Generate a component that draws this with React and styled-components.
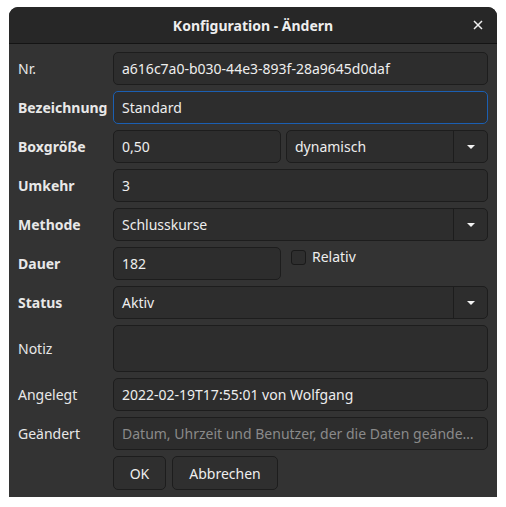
import React from 'react';
import styled, { createGlobalStyle } from 'styled-components';

const GlobalStyle = createGlobalStyle`
  html, body {
    margin: 0;
    padding: 0;
    background: #ffffff;
  }
  body {
    font-family: 'Noto Sans', 'DejaVu Sans', sans-serif;
    font-size: 14px;
  }
`;

const Page = styled.div`
  width: 506px;
  height: 507px;
  padding: 7px 9px 10px 9px;
  box-sizing: border-box;
`;

const Window = styled.div`
  width: 488px;
  height: 490px;
  background: #333333;
  border-radius: 9px 9px 0 0;
  overflow: hidden;
  display: flex;
  flex-direction: column;
`;

const TitleBar = styled.div`
  height: 36px;
  background: #272727;
  border-bottom: 1px solid #141414;
  display: flex;
  align-items: center;
  justify-content: center;
  position: relative;
  color: #eeeeee;
  font-weight: 700;
  font-size: 14px;
`;

const CloseButton = styled.span`
  position: absolute;
  right: 12px;
  top: 11px;
  width: 14px;
  height: 14px;
  display: flex;
  align-items: center;
  justify-content: center;
`;

const Form = styled.div`
  display: flex;
  flex-direction: column;
  gap: 6px;
  padding: 8px 9px 0 9px;
`;

const Row = styled.div`
  display: grid;
  grid-template-columns: 95px 1fr;
  align-items: center;
  min-height: ${(p) => p.$h || 33}px;
`;

const Label = styled.div`
  color: #e8e8e8;
  font-weight: ${(p) => (p.$bold ? 700 : 400)};
  font-size: 14px;
  white-space: nowrap;
`;

const Field = styled.div`
  height: ${(p) => p.$h || 33}px;
  box-sizing: border-box;
  background: #2d2d2d;
  border: 1px solid ${(p) => (p.$focus ? '#1b5fb2' : '#1d1d1d')};
  border-radius: 5px;
  display: flex;
  align-items: center;
  padding: 0 8px;
  color: ${(p) => (p.$placeholder ? '#8a8a8a' : '#eeeeee')};
  font-size: 14px;
  white-space: nowrap;
  overflow: hidden;
  min-width: 0;
`;

const Split = styled.div`
  display: grid;
  grid-template-columns: 168px 1fr;
  gap: 5px;
  align-items: ${(p) => (p.$top ? 'start' : 'center')};
`;

const Combo = styled.div`
  height: 33px;
  box-sizing: border-box;
  background: #2d2d2d;
  border: 1px solid #1d1d1d;
  border-radius: 5px;
  display: grid;
  grid-template-columns: 1fr 34px;
  color: #eeeeee;
  font-size: 14px;
  min-width: 0;
`;

const ComboText = styled.div`
  display: flex;
  align-items: center;
  padding: 0 8px;
  white-space: nowrap;
`;

const ComboArrow = styled.div`
  border-left: 1px solid #1d1d1d;
  display: flex;
  align-items: center;
  justify-content: center;
`;

const Check = styled.label`
  display: flex;
  align-items: center;
  gap: 6px;
  padding: 2px 0 0 5px;
  line-height: 16px;
  color: #eeeeee;
  font-size: 14px;
`;

const Box = styled.span`
  width: 13px;
  height: 13px;
  margin-top: 1px;
  border: 1px solid #1a1a1a;
  background: #2e2e2e;
  border-radius: 3px;
`;

const Buttons = styled.div`
  display: flex;
  gap: 6px;
  margin-left: 95px;
`;

const Button = styled.button`
  height: 34px;
  box-sizing: border-box;
  width: ${(p) => p.$w}px;
  padding: 0;
  background: #2f2f2f;
  border: 1px solid #1d1d1d;
  border-radius: 5px;
  color: #eeeeee;
  font-family: inherit;
  font-size: 14px;
`;

const Arrow = () => (
  <svg width="10" height="6" viewBox="0 0 10 6">
    <path d="M1 1h8L5 5z" fill="#f2f2f2" />
  </svg>
);

const ComboBox = ({ value }) => (
  <Combo>
    <ComboText>{value}</ComboText>
    <ComboArrow>
      <Arrow />
    </ComboArrow>
  </Combo>
);

export default function App() {
  return (
    <Page>
      <GlobalStyle />
      <Window>
        <TitleBar>
          Konfiguration - Ändern
          <CloseButton>
            <svg width="10" height="10" viewBox="0 0 10 10">
              <path d="M1 1l8 8M9 1l-8 8" stroke="#f0f0f0" strokeWidth="1.5" />
            </svg>
          </CloseButton>
        </TitleBar>
        <Form>
          <Row>
            <Label>Nr.</Label>
            <Field>a616c7a0-b030-44e3-893f-28a9645d0daf</Field>
          </Row>
          <Row>
            <Label $bold>Bezeichnung</Label>
            <Field $focus>Standard</Field>
          </Row>
          <Row>
            <Label $bold>Boxgröße</Label>
            <Split>
              <Field>0,50</Field>
              <ComboBox value="dynamisch" />
            </Split>
          </Row>
          <Row>
            <Label $bold>Umkehr</Label>
            <Field>3</Field>
          </Row>
          <Row>
            <Label $bold>Methode</Label>
            <ComboBox value="Schlusskurse" />
          </Row>
          <Row>
            <Label $bold>Dauer</Label>
            <Split $top>
              <Field>182</Field>
              <Check>
                <Box />
                Relativ
              </Check>
            </Split>
          </Row>
          <Row>
            <Label $bold>Status</Label>
            <ComboBox value="Aktiv" />
          </Row>
          <Row $h={47}>
            <Label>Notiz</Label>
            <Field $h={47} />
          </Row>
          <Row>
            <Label>Angelegt</Label>
            <Field>2022-02-19T17:55:01 von Wolfgang</Field>
          </Row>
          <Row>
            <Label>Geändert</Label>
            <Field $placeholder>Datum, Uhrzeit und Benutzer, der die Daten geände…</Field>
          </Row>
          <Buttons>
            <Button $w={53}>OK</Button>
            <Button $w={106}>Abbrechen</Button>
          </Buttons>
        </Form>
      </Window>
    </Page>
  );
}
